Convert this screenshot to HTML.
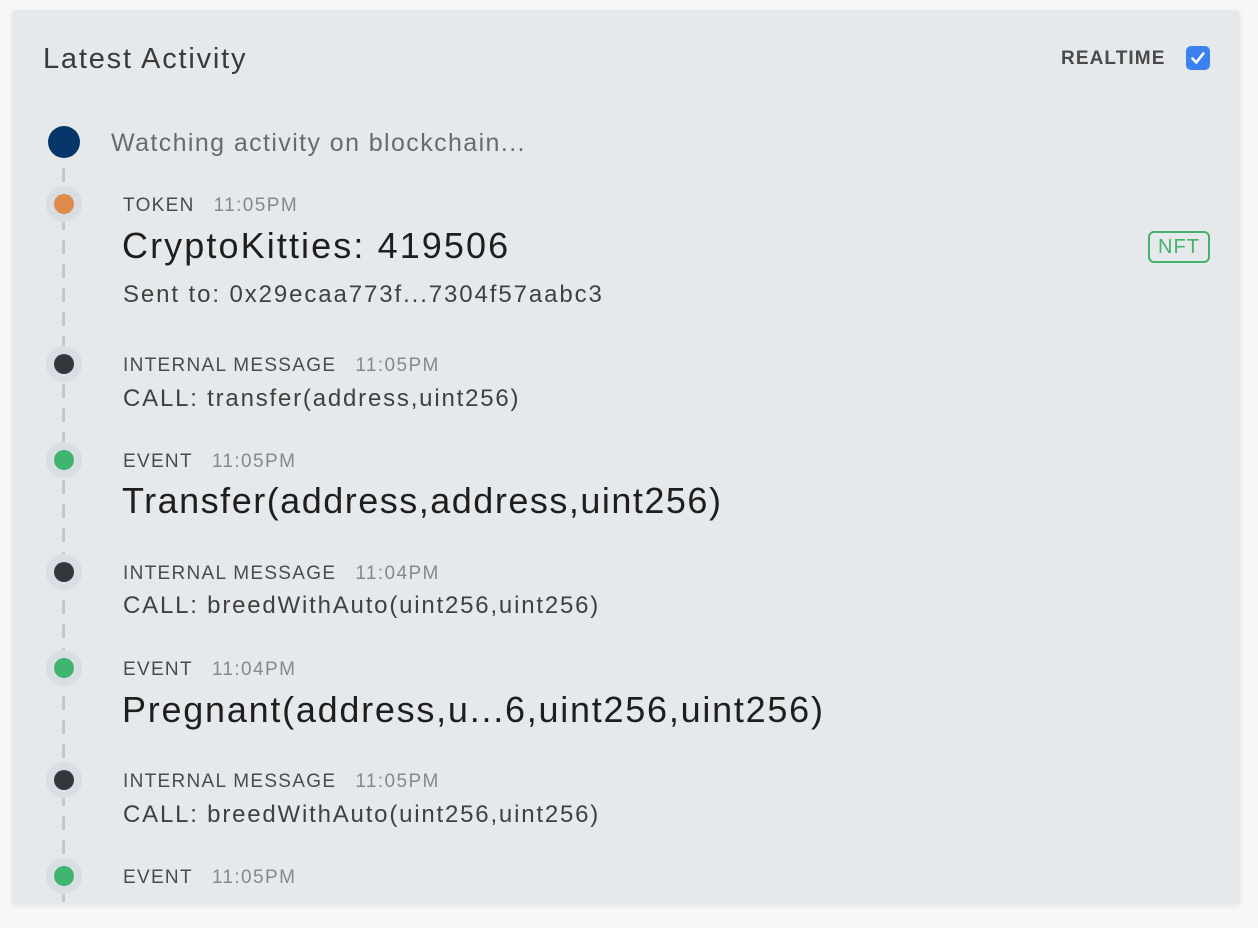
<!DOCTYPE html>
<html><head><style>
body{margin:0;width:1258px;height:928px;background:#f7f7f7;font-family:"Liberation Sans",sans-serif;position:relative;overflow:hidden}
.card{position:absolute;left:12px;top:10px;width:1228px;height:894px;background:#e6e9ec;border-radius:4px;overflow:hidden;box-shadow:0 2px 6px rgba(0,0,0,.08)}
.a{position:absolute;white-space:nowrap}
.line{position:absolute;left:50px;top:158px;width:3px;height:760px;background:repeating-linear-gradient(to bottom,#c4c6c9 0 14px,transparent 14px 24px)}
.halo{position:absolute;width:36px;height:36px;border-radius:50%;background:#d9dee5;left:34px}
.dot{position:absolute;width:20px;height:20px;border-radius:50%;left:8px;top:8px}
.lab{font-size:19px;color:#4a4a4a;letter-spacing:1.3px;line-height:24px;margin-top:2px}
.lab span{color:#888;letter-spacing:1.4px;margin-left:19px}
.t{font-size:36px;color:#1e1e1e;line-height:44px;letter-spacing:1.6px}
.s{font-size:24px;color:#404040;line-height:28px;letter-spacing:1.8px}
</style></head><body>
<div class="card">
<div class="a" style="left:31px;top:30px;font-size:29px;color:#3a3a3a;line-height:38px;letter-spacing:1.8px">Latest Activity</div>
<div class="a" style="left:1049px;top:37px;font-size:19px;font-weight:bold;color:#4a4a4a;letter-spacing:1.1px;line-height:24px">REALTIME</div>
<div class="a" style="left:1174px;top:36px;width:24px;height:24px;border-radius:5px;background:#3b82f0"><svg width="24" height="24"><path d="M6.5 12.5l3.8 4 7-9" stroke="#fff" stroke-width="2.6" fill="none" stroke-linecap="round" stroke-linejoin="round"/></svg></div>
<div class="line"></div>
<div class="a" style="left:36px;top:116px;width:32px;height:32px;border-radius:50%;background:#06356a"></div>
<div class="a" style="left:99px;top:118px;font-size:25px;color:#6a6a6a;line-height:30px;letter-spacing:1.4px">Watching activity on blockchain...</div>

<div class="halo" style="top:176px"><div class="dot" style="background:#df8b4c"></div></div>
<div class="a lab" style="left:111px;top:182px">TOKEN<span>11:05PM</span></div>
<div class="a t" style="left:110px;top:214px;letter-spacing:2.1px">CryptoKitties: 419506</div>
<div class="a" style="left:1136px;top:221px;width:62px;height:32px;border:2px solid #44b26b;border-radius:6px;color:#44b26b;font-size:20px;text-align:center;box-sizing:border-box;line-height:28px;letter-spacing:1px">NFT</div>
<div class="a s" style="left:111px;top:271px;letter-spacing:1.9px">Sent to: 0x29ecaa773f...7304f57aabc3</div>

<div class="halo" style="top:336px"><div class="dot" style="background:#33373b"></div></div>
<div class="a lab" style="left:111px;top:342px">INTERNAL MESSAGE<span>11:05PM</span></div>
<div class="a s" style="left:111px;top:375px">CALL: transfer(address,uint256)</div>

<div class="halo" style="top:432px"><div class="dot" style="background:#41b56d"></div></div>
<div class="a lab" style="left:111px;top:438px">EVENT<span>11:05PM</span></div>
<div class="a t" style="left:110px;top:469px;letter-spacing:1.5px">Transfer(address,address,uint256)</div>

<div class="halo" style="top:544px"><div class="dot" style="background:#33373b"></div></div>
<div class="a lab" style="left:111px;top:550px">INTERNAL MESSAGE<span>11:04PM</span></div>
<div class="a s" style="left:111px;top:582px">CALL: breedWithAuto(uint256,uint256)</div>

<div class="halo" style="top:640px"><div class="dot" style="background:#41b56d"></div></div>
<div class="a lab" style="left:111px;top:646px">EVENT<span>11:04PM</span></div>
<div class="a t" style="left:110px;top:678px;letter-spacing:1.75px">Pregnant(address,u...6,uint256,uint256)</div>

<div class="halo" style="top:752px"><div class="dot" style="background:#33373b"></div></div>
<div class="a lab" style="left:111px;top:758px">INTERNAL MESSAGE<span>11:05PM</span></div>
<div class="a s" style="left:111px;top:791px">CALL: breedWithAuto(uint256,uint256)</div>

<div class="halo" style="top:848px"><div class="dot" style="background:#41b56d"></div></div>
<div class="a lab" style="left:111px;top:854px">EVENT<span>11:05PM</span></div>
<div class="a t" style="left:110px;top:886px;letter-spacing:1.75px">Pregnant(address,u...6,uint256,uint256)</div>
</div>
</body></html>
